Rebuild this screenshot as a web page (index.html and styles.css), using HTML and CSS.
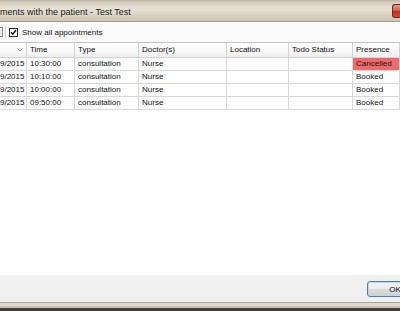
FILE: index.html
```html
<!DOCTYPE html>
<html>
<head>
  <meta charset="UTF-8">
  <title>Appointments with the patient</title>
  <link rel="stylesheet" href="styles.css">
</head>
<body>
  <div class="window">
    <div class="titlebar">
      <span class="title">ments with the patient - Test Test</span>
      <span class="close-btn"></span>
    </div>

    <div class="toolbar">
      <span class="tool-edge"></span>
      <span class="tool-sep"></span>
      <label class="check">
        <svg width="9" height="9" viewBox="0 0 9 9">
          <rect x="0.5" y="0.5" width="8" height="8" fill="#fff" stroke="#2b2b2b"/>
          <polyline points="2,4.2 3.8,6.2 7,2.3" fill="none" stroke="#111" stroke-width="1.4"/>
        </svg>
        Show all appointments
      </label>
    </div>

    <div class="grid">
      <div class="row head">
        <div class="cell date-head">
          <svg width="6" height="4" viewBox="0 0 6 4"><polyline points="0.5,0.5 3,3 5.5,0.5" fill="none" stroke="#9a9a9a"/></svg>
        </div>
        <div class="cell">Time</div>
        <div class="cell">Type</div>
        <div class="cell">Doctor(s)</div>
        <div class="cell">Location</div>
        <div class="cell">Todo Status</div>
        <div class="cell">Presence</div>
      </div>

      <div class="row">
        <div class="cell date">9/2015</div>
        <div class="cell">10:30:00</div>
        <div class="cell">consultation</div>
        <div class="cell">Nurse</div>
        <div class="cell"></div>
        <div class="cell"></div>
        <div class="cell cancelled">Cancelled</div>
      </div>
      <div class="row">
        <div class="cell date">9/2015</div>
        <div class="cell">10:10:00</div>
        <div class="cell">consultation</div>
        <div class="cell">Nurse</div>
        <div class="cell"></div>
        <div class="cell"></div>
        <div class="cell">Booked</div>
      </div>
      <div class="row">
        <div class="cell date">9/2015</div>
        <div class="cell">10:00:00</div>
        <div class="cell">consultation</div>
        <div class="cell">Nurse</div>
        <div class="cell"></div>
        <div class="cell"></div>
        <div class="cell">Booked</div>
      </div>
      <div class="row">
        <div class="cell date">9/2015</div>
        <div class="cell">09:50:00</div>
        <div class="cell">consultation</div>
        <div class="cell">Nurse</div>
        <div class="cell"></div>
        <div class="cell"></div>
        <div class="cell">Booked</div>
      </div>
    </div>

    <div class="footer">
      <button class="ok-btn">OK</button>
    </div>

    <div class="frame-bottom"></div>
  </div>
</body>
</html>
```

FILE: styles.css
```css
* {
  box-sizing: border-box;
}

body {
  margin: 0;
  width: 400px;
  height: 311px;
  overflow: hidden;
  font-family: "Liberation Sans", Arial, sans-serif;
  font-size: 8px;
  color: #111;
  background: #fff;
}

.window {
  display: flex;
  flex-direction: column;
  height: 311px;
  overflow: hidden;
}

.titlebar {
  height: 22px;
  display: flex;
  align-items: center;
  justify-content: space-between;
  overflow: hidden;
  background: linear-gradient(to bottom, #bdb5a5 0, #d9d2c3 3px, #e6e0d4 9px, #d7cfbe 16px, #cfc7b5 100%);
  border-bottom: 1px solid #a59e8f;
}

.title {
  font-size: 9px;
  color: #161616;
  text-shadow: 0 0 3px #f2eee6;
  padding-top: 2px;
}

.close-btn {
  width: 8px;
  height: 14px;
  margin-top: 1px;
  border: 1px solid #6b2a20;
  border-right: none;
  border-radius: 3px 0 0 3px;
  background: linear-gradient(to bottom, #e59a8a 0, #d2604c 45%, #b8321f 55%, #c8503a 100%);
}

.toolbar {
  height: 20px;
  display: flex;
  align-items: center;
  background: #fbfbfb;
}

.tool-edge {
  width: 3px;
  height: 10px;
  border: 1px solid #8a8a8a;
  border-left: none;
  background: #eee;
}

.tool-sep {
  width: 1px;
  height: 12px;
  margin-left: 2px;
  background: #d4d4d4;
}

.check {
  display: flex;
  align-items: center;
  gap: 4px;
  margin-left: 3px;
  font-size: 8px;
}

.grid {
  flex: 1;
  background: #fff;
  border-top: 1px solid #c4c4c4;
}

.row {
  display: grid;
  grid-template-columns: 27px 48px 64px 88px 62px 64px 1fr;
  height: 13px;
}

.row.head {
  height: 15px;
  background: linear-gradient(to bottom, #ffffff 0, #f6f6f6 60%, #eeeeee 100%);
}

.cell {
  border-right: 1px solid #d9d9d9;
  border-bottom: 1px solid #d9d9d9;
  padding-left: 3px;
  line-height: 12px;
  white-space: nowrap;
  overflow: hidden;
}

.head .cell {
  line-height: 14px;
  border-color: #d3d3d3;
}

.date {
  padding-left: 0;
}

.date-head {
  display: flex;
  align-items: center;
  justify-content: flex-end;
  padding-right: 3px;
}

.cancelled {
  background: #ef6b6b;
}

.footer {
  height: 27px;
  display: flex;
  align-items: center;
  justify-content: flex-start;
  overflow: hidden;
  background: #f0f0f0;
  padding-top: 1px;
  padding-left: 367px;
}

.ok-btn {
  flex: none;
  width: 56px;
  height: 16px;
  padding: 0;
  font-family: "Liberation Sans", Arial, sans-serif;
  font-size: 8px;
  color: #111;
  border: 1px solid #4f7fa8;
  border-radius: 3px;
  background: linear-gradient(to bottom, #f4f4f4 0, #ebebeb 50%, #dcdcdc 51%, #d2d2d2 100%);
  box-shadow: inset 0 0 0 1px #b9d7ee;
}

.frame-bottom {
  height: 9px;
  background: linear-gradient(to bottom, #a9a294 0, #a9a294 1px, #e1dbcf 1px, #e1dbcf 4px, #c5bead 4px, #c5bead 6px, #444 6px, #3a3a3a 100%);
}
```
